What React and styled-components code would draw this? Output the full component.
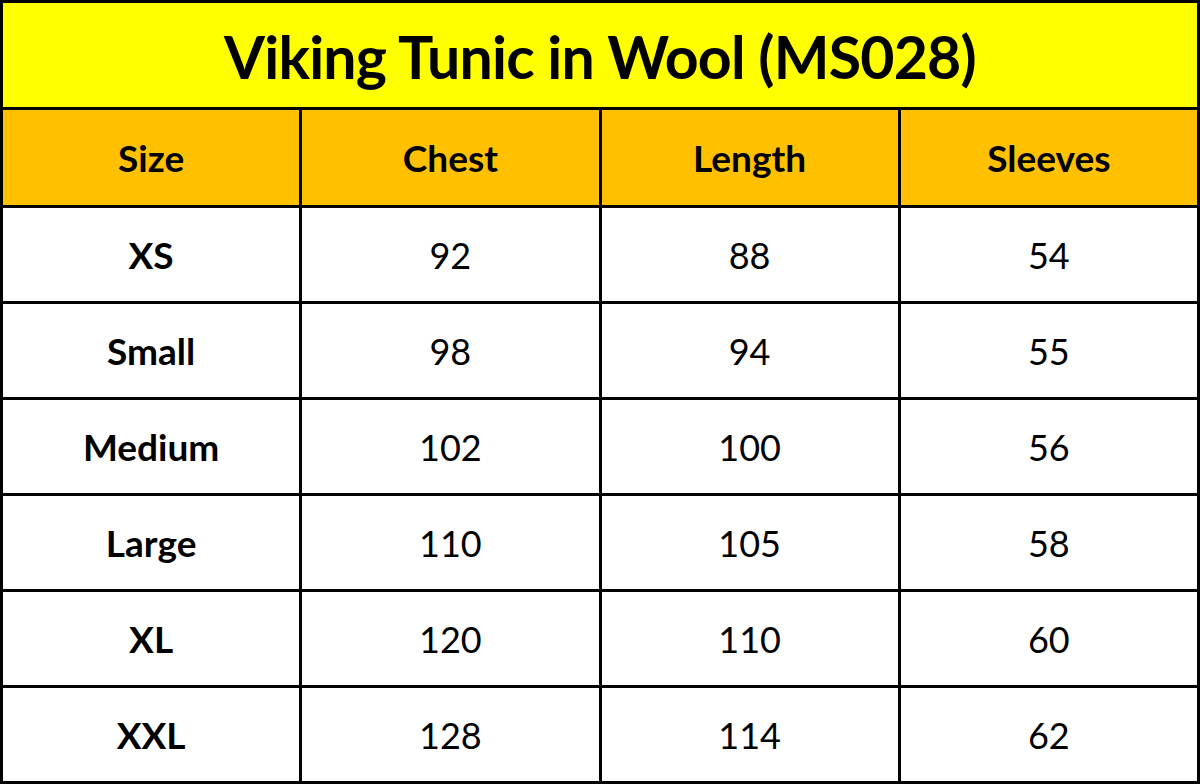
import React from "react";
import styled, { createGlobalStyle } from "styled-components";

const GlobalStyle = createGlobalStyle`
  html, body {
    margin: 0;
    padding: 0;
    background: #fff;
  }
  body {
    font-family: Lato, "Open Sans", sans-serif;
  }
`;

const sizes = [
  { size: "XS", chest: 92, length: 88, sleeves: 54 },
  { size: "Small", chest: 98, length: 94, sleeves: 55 },
  { size: "Medium", chest: 102, length: 100, sleeves: 56 },
  { size: "Large", chest: 110, length: 105, sleeves: 58 },
  { size: "XL", chest: 120, length: 110, sleeves: 60 },
  { size: "XXL", chest: 128, length: 114, sleeves: 62 }
];

const columns = ["Size", "Chest", "Length", "Sleeves"];

const Chart = styled.div`
  width: 1200px;
  height: 784px;
  box-sizing: border-box;
  background: #000;
  padding: 3px 3px 2px 3px;
  display: grid;
  grid-template-columns: repeat(4, 1fr);
  grid-template-rows: 104px 95px repeat(6, 93px);
  gap: 3px;
`;

const Title = styled.div`
  grid-column: 1 / -1;
  background: #ffff00;
  display: flex;
  align-items: center;
  justify-content: center;
  padding-top: 2px;
  font-size: 59px;
  font-weight: 700;
  letter-spacing: -0.8px;
  color: #000;
`;

const Cell = styled.div`
  background: ${props => (props.head ? "#ffc000" : "#fff")};
  display: flex;
  align-items: center;
  justify-content: center;
  font-size: ${props => (props.bold ? "37px" : "36px")};
  font-weight: ${props => (props.bold ? 700 : 400)};
  color: #000;
`;

const App = () => {
  return (
    <>
      <GlobalStyle />
      <Chart>
        <Title>Viking Tunic in Wool (MS028)</Title>
        {columns.map(col => (
          <Cell key={col} head bold>
            {col}
          </Cell>
        ))}
        {sizes.map(row => (
          <React.Fragment key={row.size}>
            <Cell bold>{row.size}</Cell>
            <Cell>{row.chest}</Cell>
            <Cell>{row.length}</Cell>
            <Cell>{row.sleeves}</Cell>
          </React.Fragment>
        ))}
      </Chart>
    </>
  );
};

export default App;
